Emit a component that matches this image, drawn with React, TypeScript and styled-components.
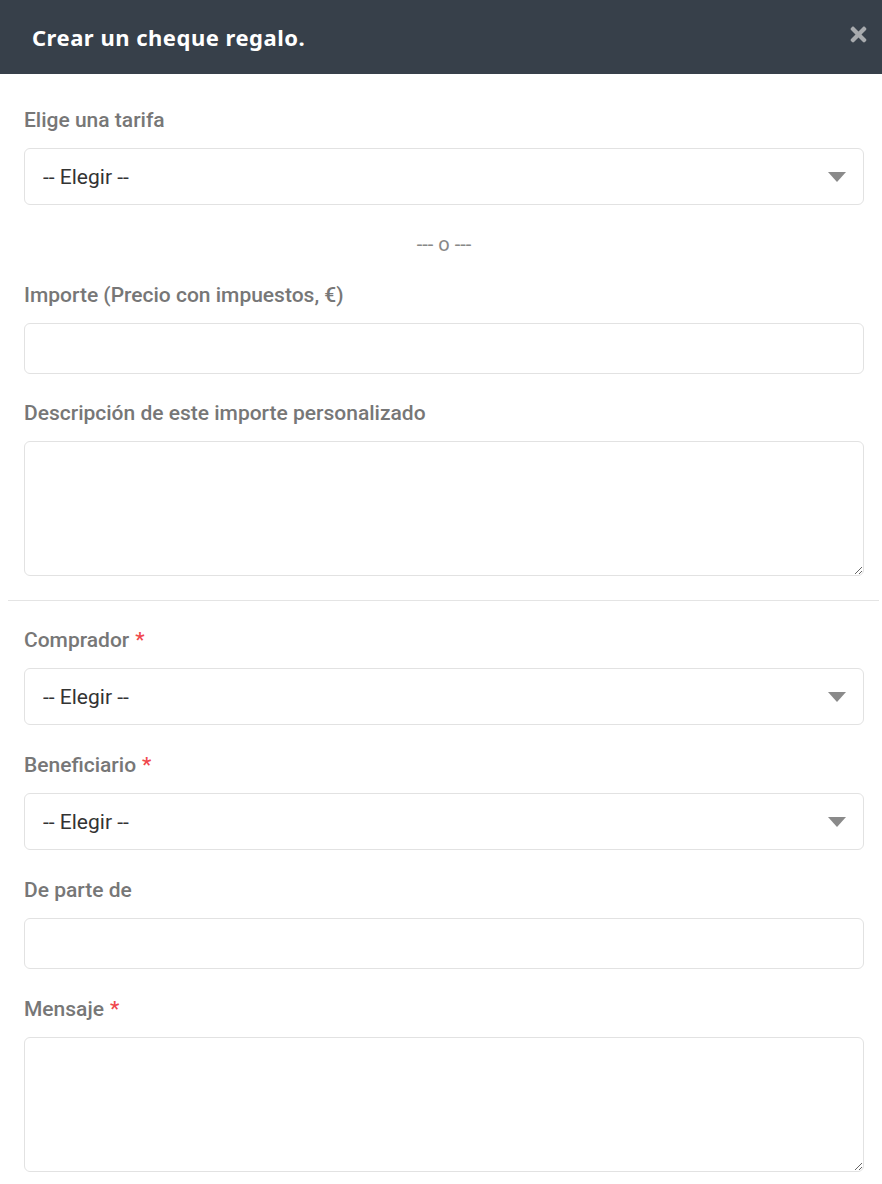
import styled, { createGlobalStyle } from 'styled-components'
import { FaTimes } from 'react-icons/fa'

const GlobalStyle = createGlobalStyle`
  body {
    margin: 0;
    background: #fff;
    font-family: Roboto, 'Liberation Sans', sans-serif;
  }
`

const Modal = styled.div`
  width: 882px;
  background: #fff;
`

const Header = styled.header`
  height: 74px;
  background: #37404a;
  display: flex;
  align-items: center;
  justify-content: space-between;
  padding: 0 12px 0 32px;
  box-sizing: border-box;
`

const Title = styled.h2`
  margin: 0;
  color: #fff;
  font-family: 'Noto Sans', 'Open Sans', sans-serif;
  font-weight: 700;
  font-size: 22px;
  letter-spacing: 0.5px;
`

const CloseButton = styled.button`
  border: 0;
  background: none;
  padding: 0;
  color: #a8abae;
  display: flex;
  margin-top: -6px;
  cursor: pointer;
`

const Body = styled.div<{ $top: number }>`
  padding: ${(p) => p.$top}px 18px 0 24px;
`

const Section = styled.div<{ $gap: number }>`
  display: flex;
  flex-direction: column;
  gap: ${(p) => p.$gap}px;
`

const Group = styled.div`
  display: flex;
  flex-direction: column;
  gap: 16px;
`

const Label = styled.label`
  font-size: 21px;
  line-height: 24px;
  font-weight: 500;
  color: #777;
`

const Required = styled.span`
  color: #f0484d;
  margin-left: 6px;
`

const Or = styled.div`
  text-align: center;
  font-size: 20px;
  line-height: 24px;
  color: #888;
`

const SelectWrap = styled.div`
  position: relative;
`

const Select = styled.select`
  appearance: none;
  width: 100%;
  height: 57px;
  padding: 0 18px;
  border: 1px solid #e2e2e2;
  border-radius: 6px;
  background: #fff;
  font-family: Roboto, sans-serif;
  font-size: 21px;
  color: #333;
  outline: none;
`

const Arrow = styled.svg`
  position: absolute;
  right: 18px;
  top: 50%;
  transform: translateY(-50%);
  pointer-events: none;
`

const Input = styled.input`
  width: 100%;
  height: 51px;
  box-sizing: border-box;
  border: 1px solid #e2e2e2;
  border-radius: 6px;
  padding: 0 18px;
  font-family: Roboto, sans-serif;
  font-size: 21px;
  outline: none;
`

const TextArea = styled.textarea`
  display: block;
  width: 100%;
  height: 135px;
  box-sizing: border-box;
  border: 1px solid #e2e2e2;
  border-radius: 6px;
  padding: 12px 18px;
  font-family: Roboto, sans-serif;
  font-size: 21px;
  resize: vertical;
  outline: none;
`

const Divider = styled.hr`
  border: 0;
  border-top: 1px solid #e4e4e4;
  margin: 24px 3px 27px 8px;
`

const ChooseSelect = () => (
  <SelectWrap>
    <Select defaultValue="">
      <option value="">-- Elegir --</option>
    </Select>
    <Arrow width="18" height="10" viewBox="0 0 18 10">
      <path d="M0 0 L18 0 L9 10 Z" fill="#8a8a8a" />
    </Arrow>
  </SelectWrap>
)

export default function App() {
  return (
    <>
      <GlobalStyle />
      <Modal>
        <Header>
          <Title>Crear un cheque regalo.</Title>
          <CloseButton aria-label="Cerrar">
            <FaTimes size={23} />
          </CloseButton>
        </Header>
        <Body $top={34}>
          <Section $gap={27}>
            <Group>
              <Label>Elige una tarifa</Label>
              <ChooseSelect />
            </Group>
            <Or>--- o ---</Or>
            <Group>
              <Label>Importe (Precio con impuestos, €)</Label>
              <Input type="text" />
            </Group>
            <Group>
              <Label>Descripción de este importe personalizado</Label>
              <TextArea />
            </Group>
          </Section>
        </Body>
        <Divider />
        <Body $top={0}>
          <Section $gap={28}>
            <Group>
              <Label>
                Comprador<Required>*</Required>
              </Label>
              <ChooseSelect />
            </Group>
            <Group>
              <Label>
                Beneficiario<Required>*</Required>
              </Label>
              <ChooseSelect />
            </Group>
            <Group>
              <Label>De parte de</Label>
              <Input type="text" />
            </Group>
            <Group>
              <Label>
                Mensaje<Required>*</Required>
              </Label>
              <TextArea />
            </Group>
          </Section>
        </Body>
      </Modal>
    </>
  )
}
